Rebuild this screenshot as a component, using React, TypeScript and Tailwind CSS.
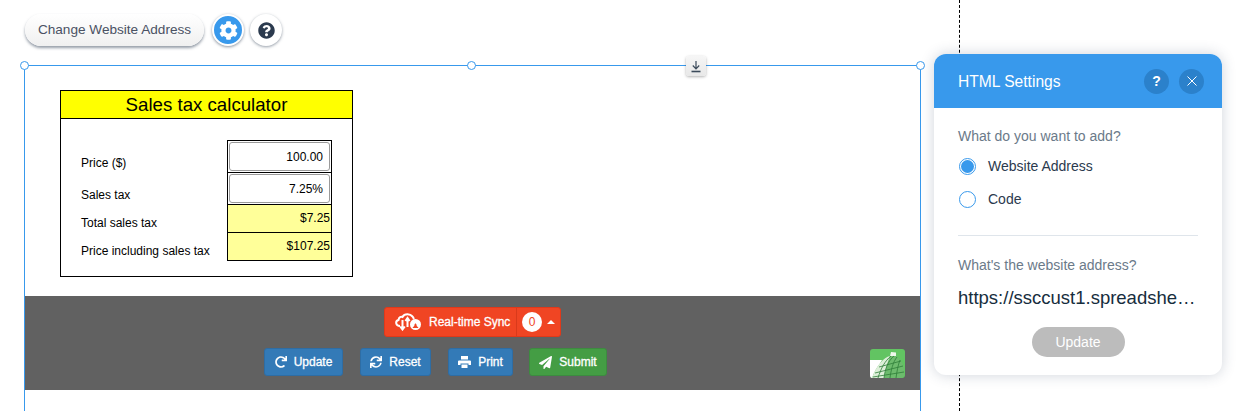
import { FaCog, FaQuestionCircle, FaRedo, FaSync, FaPaperPlane } from "react-icons/fa";

function Handle({ className }: { className: string }) {
  return <span className={"absolute h-[9px] w-[9px] rounded-full border border-[#3899ec] bg-white " + className} />;
}

function CloudIcon() {
  return (
    <svg width="27" height="18" viewBox="0 0 27 18" fill="none" stroke="white" strokeWidth="2">
      <path d="M5 13 C0.5 13 0 8 3.5 7 C4 4 6 3.5 7.5 4 C9.5 0.5 15 0.5 17.5 3.5 C18.5 4.5 18.8 5.5 18.8 6.5" />
      <path d="M7.5 7 V16 M5.2 13.5 L7.5 16.5 L9.8 13.5" />
      <path d="M12.5 14 V5.5 M10.4 8 L12.5 5 L14.6 8" />
      <circle cx="20.5" cy="11.5" r="5.5" fill="white" stroke="none" />
      <path d="M17.5 15 C18.5 13.5 19.2 13.5 19.5 12 C19.5 10 21.5 10 21.5 12 C21.8 13.5 22.5 13.5 23.5 15 Z" fill="#f04523" stroke="none" />
    </svg>
  );
}

function PrintIcon() {
  return (
    <svg width="13" height="12" viewBox="0 0 13 12" fill="white">
      <rect x="3" y="0" width="7" height="3.5" />
      <path d="M1 4.5 H12 Q13 4.5 13 5.5 V9 H10.5 V7.5 H2.5 V9 H0 V5.5 Q0 4.5 1 4.5 Z" />
      <rect x="3.5" y="8.5" width="6" height="3.5" />
    </svg>
  );
}

function SheetLogo() {
  return (
    <svg width="35" height="29" viewBox="0 0 35 29">
      <rect width="35" height="29" rx="3" fill="#62c462" />
      <path d="M0 11 H12 L2 29 Q0 29 0 26 Z" fill="white" />
      <path d="M2 29 C6 17 14 8 23 6 C30 8 33 14 34 20 L34 26 Q34 29 31 29 Z" fill="#6dbb6d" />
      <path d="M2 29 C6 17 14 8 20 7 C17 14 15 22 14 29 Z" fill="#dcefd8" />
      <path d="M20 7 L21 3 L26 3.5 L26 7 Z" fill="#eef8ec" />
      <path d="M8 29 C11 19 15 12 21 7 M14 29 C15 20 18 12 24 7 M20 29 C21 21 23 13 27 8 M26 29 C27 22 28 16 30 11 M5 24 L33 17 M9 18 L31 12 M3 28 L34 23" stroke="#2e7d38" strokeWidth="0.8" fill="none" />
    </svg>
  );
}

function CalcRow({ label, value, kind }: { label: string; value: string; kind: "input" | "output" }) {
  return (
    <div className="flex">
      <div className="flex w-[166px] items-end pb-[1px] pl-[20px] text-[12px] text-black">{label}</div>
      {kind === "input" ? (
        <div className="h-[32px] w-[105px] border-x border-b border-black bg-white p-px">
          <div className="h-full rounded-[3px] border border-[#9a9a9a] pr-[6px] pt-[7px] text-right text-[12px] leading-[14px] text-black">{value}</div>
        </div>
      ) : (
        <div className="h-[28px] w-[105px] border-x border-b border-black bg-[#ffff99] pr-[1px] pt-[6px] text-right text-[12px] leading-[14px] text-black">{value}</div>
      )}
    </div>
  );
}

function BarButton({ icon, label, className }: { icon: React.ReactNode; label: string; className: string }) {
  return (
    <div className={"flex h-[28px] items-center justify-center gap-[7px] rounded-[3px] border text-[12px] text-white [-webkit-text-stroke:0.3px_white] " + className}>
      {icon}
      {label}
    </div>
  );
}

export default function App() {
  return (
    <div className="relative h-[411px] w-[1238px] overflow-hidden bg-white font-['Liberation_Sans',sans-serif]">
      {/* dashed page guide */}
      <div className="absolute bottom-0 left-[959px] top-0 border-l border-dashed border-black" />

      {/* toolbar */}
      <div className="flex items-center pl-[25px] pt-[14px]">
        <div className="flex h-[32px] w-[179px] items-center justify-center rounded-full bg-gradient-to-b from-white to-[#f0f0f0] text-[13.6px] text-[#4a5163] shadow-[0_2px_3px_rgba(60,75,95,0.55)]">
          Change Website Address
        </div>
        <div className="ml-[8px] flex h-[32px] w-[32px] items-center justify-center rounded-full border-2 border-white bg-[#3899ec] shadow-[0_1px_3px_rgba(60,75,95,0.6)]">
          <FaCog className="h-[19px] w-[19px] text-white" />
        </div>
        <div className="ml-[6px] flex h-[32px] w-[32px] items-center justify-center rounded-full bg-white shadow-[0_1px_3px_rgba(60,75,95,0.55)]">
          <FaQuestionCircle className="h-[17px] w-[17px] text-[#2b3a4e]" />
        </div>
      </div>

      {/* selected html frame */}
      <div className="relative ml-[24px] mt-[19px] h-[360px] w-[897px] border-x border-t border-[#3899ec]">
        <Handle className="left-[-5px] top-[-5px]" />
        <Handle className="left-[442px] top-[-5px]" />
        <Handle className="right-[-5px] top-[-5px]" />
        <div className="absolute left-[661px] top-[-10px] flex h-[20px] w-[20px] items-center justify-center rounded-[3px] bg-gradient-to-b from-[#f6f6f6] to-[#e8e8e8] shadow-[0_1px_3px_rgba(0,0,0,0.3)]">
          <svg width="12" height="13" viewBox="0 0 12 13" fill="none" stroke="#3b4a5a" strokeWidth="1.2">
            <path d="M6 1 V8.5 M2.8 5.5 L6 8.8 L9.2 5.5" />
            <path d="M1.5 11.5 H10.5" strokeWidth="1.6" />
          </svg>
        </div>

        <div className="pl-[35px] pt-[24px]">
          <div className="h-[187px] w-[293px] border border-black">
            <div className="flex h-[28px] items-center justify-center border-b border-black bg-[#ffff00] text-[18.67px] text-black">
              Sales tax calculator
            </div>
            <div className="pt-[21px]">
              <div className="ml-[166px] h-px w-[105px] bg-black" />
              <CalcRow label="Price ($)" value="100.00" kind="input" />
              <CalcRow label="Sales tax" value="7.25%" kind="input" />
              <CalcRow label="Total sales tax" value="$7.25" kind="output" />
              <CalcRow label="Price including sales tax" value="$107.25" kind="output" />
            </div>
          </div>
        </div>

        {/* action bar */}
        <div className="relative mt-[19px] h-[94px] bg-[#616161]">
          <div className="flex justify-center pt-[11px]">
            <div className="flex h-[30px] w-[177px] rounded-[3px] border border-[#e0391a] bg-[#f04523] text-[12px] text-white [-webkit-text-stroke:0.3px_white]">
              <div className="flex w-[132px] items-center gap-[7px] border-r border-[#d93a1b] pl-[10px]">
                <CloudIcon />
                Real-time Sync
              </div>
              <div className="flex flex-1 items-center pl-[5px]">
                <span className="flex h-[20px] w-[20px] items-center justify-center rounded-full bg-white text-[#f04523] [-webkit-text-stroke:0]">0</span>
                <span className="ml-[5px] h-0 w-0 border-x-[4px] border-b-[4px] border-x-transparent border-b-white" />
              </div>
            </div>
          </div>
          <div className="flex pl-[239px] pt-[11px]">
            <BarButton icon={<FaRedo className="h-[12px] w-[12px]" />} label="Update" className="w-[79px] border-[#2e6da4] bg-[#337ab7]" />
            <BarButton icon={<FaSync className="h-[12px] w-[12px]" />} label="Reset" className="ml-[17px] w-[71px] border-[#2e6da4] bg-[#337ab7]" />
            <BarButton icon={<PrintIcon />} label="Print" className="ml-[17px] w-[65px] border-[#2e6da4] bg-[#337ab7]" />
            <BarButton icon={<FaPaperPlane className="h-[13px] w-[13px]" />} label="Submit" className="ml-[16px] w-[78px] border-[#3d8b40] bg-[#449d44]" />
          </div>
          <div className="absolute bottom-[12px] right-[15px]">
            <SheetLogo />
          </div>
        </div>
      </div>

      {/* settings panel */}
      <div className="absolute left-[934px] top-[54px] h-[321px] w-[288px] overflow-hidden rounded-[12px] bg-white shadow-[0_0_14px_rgba(40,60,90,0.22)]">
        <div className="flex h-[54px] items-center bg-[#3899ec] pl-[24px] pr-[18px] text-[15.6px] text-white">
          <span className="flex-1 pt-[2px]">HTML Settings</span>
          <span className="flex h-[25px] w-[25px] items-center justify-center rounded-full bg-[#2b81cb] text-[14px] font-bold">?</span>
          <span className="ml-[10px] flex h-[25px] w-[25px] items-center justify-center rounded-full bg-[#2b81cb]">
            <svg width="10" height="10" viewBox="0 0 10 10" stroke="white" strokeWidth="1"><path d="M0.5 0.5 L9.5 9.5 M9.5 0.5 L0.5 9.5" /></svg>
          </span>
        </div>
        <div className="px-[24px]">
          <div className="pt-[20px] text-[14px] leading-[17px] text-[#6b7a89]">What do you want to add?</div>
          <div className="ml-px mt-[13px] flex h-[17px] items-center text-[14px] text-[#2b3a4e]">
            <span className="flex h-[17px] w-[17px] items-center justify-center rounded-full border border-[#3899ec]">
              <span className="h-[13px] w-[13px] rounded-full bg-[#3899ec]" />
            </span>
            <span className="ml-[12px]">Website Address</span>
          </div>
          <div className="ml-px mt-[16px] flex h-[17px] items-center text-[14px] text-[#2b3a4e]">
            <span className="h-[17px] w-[17px] rounded-full border border-[#3899ec]" />
            <span className="ml-[12px]">Code</span>
          </div>
          <div className="mt-[27px] h-px bg-[#dfe5eb]" />
          <div className="mt-[21px] text-[14px] leading-[17px] text-[#6b7a89]">What's the website address?</div>
          <div className="mt-[13px] whitespace-nowrap text-[18.5px] leading-[22px] text-[#162d3d]">https://ssccust1.spreadshe…</div>
          <div className="mt-[18px] flex justify-center">
            <div className="flex h-[30px] w-[93px] items-center justify-center rounded-full bg-[#bcbcbc] text-[14px] text-white">Update</div>
          </div>
        </div>
      </div>
    </div>
  );
}
